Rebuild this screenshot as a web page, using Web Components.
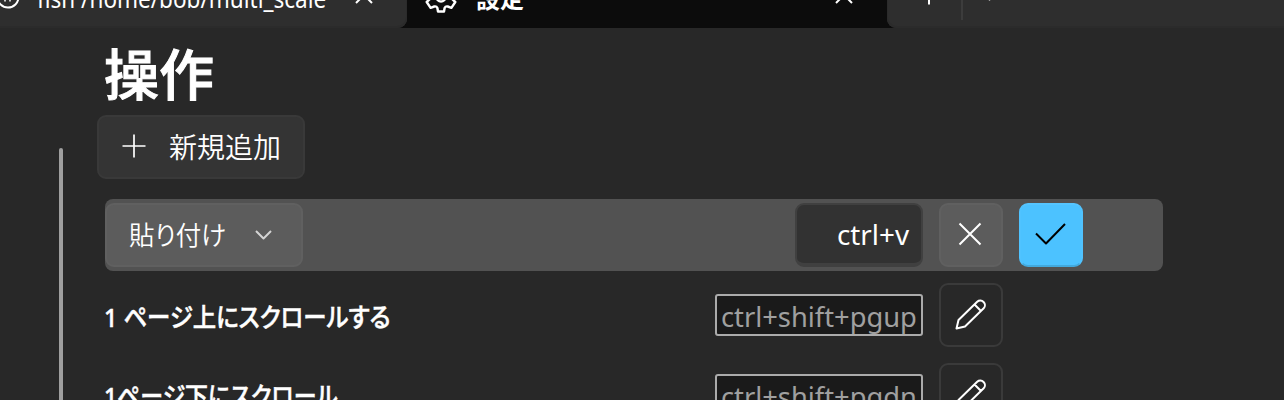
<!DOCTYPE html>
<html lang="ja">
<head>
<meta charset="utf-8">
<title>設定</title>
<style>
html,body{margin:0;height:400px;overflow:hidden;background:#282828}
body{font-family:"Noto Sans","Noto Sans CJK JP",sans-serif;color:#fff}
</style>
</head>
<body>
<settings-window></settings-window>
<script>
const define = (name, html, ready) => {
  const t = document.createElement('template');
  t.innerHTML = html;
  customElements.define(name, class extends HTMLElement {
    constructor(){ super(); this.attachShadow({mode:'open'}).append(t.content.cloneNode(true)); }
    connectedCallback(){ if (ready) ready(this, this.shadowRoot); }
  });
};

// One line of text condensed or widened to the width given in "w"; "dy" nudges its baseline.
define('fit-text', `<style>
:host{display:block;white-space:nowrap;flex:none;line-height:1.4;font-feature-settings:"palt"}
span{display:inline-block;transform-origin:0 50%}
</style><span><slot></slot></span>`, (el, root) => {
  const w = +el.getAttribute('w'), s = root.querySelector('span');
  el.style.width = w + 'px';
  s.style.transform = `translateY(${el.getAttribute('dy') || 0}px) scaleX(${w / s.offsetWidth})`;
});

const shapes = {
  plus: '<path d="M12 .5V23.5M.5 12H23.5"/>',
  close: '<path d="M1.5 1.5L22.5 22.5M22.5 1.5L1.5 22.5"/>',
  closeSmall: '<path d="M1 1L17 17M17 1L1 17"/>',
  check: '<path d="M1 11.5L11 21.5L30 2"/>',
  chevron: '<path d="M1 1L8.500 8.500L16 1"/>',
  pencil: '<path d="M1.500 29.500L3.500 21L22.200 2.800A4.600 4.600 0 0 1 28.700 9.300L10 27.500ZM19.500 5.500L26 12"/>',
  gear: '<path d="M13 1.500H19L19.600 5Q20.500 7 22.700 6.500L26.400 5.200L30.300 11L27.500 13.600Q26 16 27.500 18.400L30.300 21L26.400 26.800L22.700 25.500Q20.500 25 19.600 27L19 30.500H13L12.400 27Q11.500 25 9.300 25.500L5.600 26.800L1.700 21L4.500 18.400Q6 16 4.500 13.600L1.700 11L5.600 5.200L9.300 6.500Q11.500 7 12.400 5Z"/><circle cx="16" cy="16" r="4.500"/>',
  face: '<circle cx="12" cy="12" r="10.500"/><path d="M9 15V16.500M14 15V16.500" stroke-width="1.500"/>'
};
define('ui-icon', `<style>:host{display:block;flex:none}svg{display:block;fill:none;stroke:currentColor;stroke-linejoin:round}</style><svg></svg>`, (el, root) => {
  const s = root.querySelector('svg'), [w, h] = el.getAttribute('size').split(' ');
  s.setAttribute('width', w); s.setAttribute('height', h);
  s.setAttribute('viewBox', `0 0 ${w} ${h}`);
  s.setAttribute('stroke-width', el.getAttribute('stroke') || 2);
  s.innerHTML = shapes[el.getAttribute('name')];
});

define('ui-button', `<style>
:host{display:flex;align-items:center;justify-content:center;box-sizing:border-box;flex:none;width:64px;height:64px;border:2px solid #3a3a3a;border-radius:9px}
:host([kind=raised]){background:#343434;border-color:#393939}
:host([kind=light]){background:#5c5c5c;border-color:#606060}
:host([kind=accent]){background:#4cc2ff;border-color:#55c5ff #50c3ff #43a9dd;color:#000}
:host([wide]){justify-content:flex-start;padding-left:22px}
</style><slot></slot>`);

define('ui-tab', `<style>
:host{display:flex;box-sizing:border-box;height:76px;flex:none;align-items:center;background:#2e2e2e}
:host([pos=left]){width:407px;border-radius:0 0 9px 0;box-shadow:inset -1px -2px #2b2b2b}
:host([pos=right]){flex:1;border-radius:0 0 0 9px;box-shadow:inset 1px -2px #2b2b2b}
:host([pos=active]){width:480px;background:transparent;font-weight:600}
</style><slot></slot>`);

define('tab-strip', `<style>
:host{display:block;height:28px;overflow:hidden;background:#0c0c0c}
.row{display:flex;margin-top:-48px}
ui-tab{font-size:25px}
.sep{width:2px;height:48px;background:#3c3c3c}
</style>
<div class="row">
<ui-tab pos="left"><ui-icon name="face" size="24 24" style="margin:13px 0 0 -4px"></ui-icon><fit-text w="289" dy="8" style="margin-left:17px">fish /home/bob/multi_scale</fit-text><ui-icon name="closeSmall" size="18 18" style="margin:10px 0 0 29px"></ui-icon></ui-tab>
<ui-tab pos="active"><ui-icon name="gear" size="32 32" stroke="2.400" style="margin:13px 0 0 18px"></ui-icon><fit-text w="48" dy="8" style="margin-left:19px">設定</fit-text><ui-icon name="closeSmall" size="18 18" style="margin:10px 0 0 311px"></ui-icon></ui-tab>
<ui-tab pos="right"><ui-icon name="plus" size="24 24" style="margin:6px 0 0 30px"></ui-icon><div class="sep" style="margin:12px 0 0 20px"></div><ui-icon name="chevron" size="17 10" style="margin:12px 0 0 18px"></ui-icon></ui-tab>
</div>`);

define('key-chip', `<style>
:host{display:flex;align-items:center;justify-content:center;box-sizing:border-box;width:208px;height:42px;border:2px solid #ababab;border-radius:3px;background:#1a1a1a;color:#a0a0a0;font-size:27px}
</style><slot></slot>`);

define('key-field', `<style>
:host{display:flex;align-items:center;justify-content:flex-end;box-sizing:border-box;width:128px;height:64px;padding-right:12px;border:2px solid #404040;border-bottom-width:4px;border-radius:9px;background:#323232;font-size:27px}
</style><slot></slot>`);

define('action-row', `<style>
:host{display:grid;grid-template-columns:1fr auto 64px 64px;column-gap:16px;align-items:center;box-sizing:border-box;width:1058px;height:72px;padding-right:80px;border-radius:8px;font-size:26px;font-weight:500;-webkit-text-stroke:.5px}
:host([editing]){background:#525252;font-weight:400;-webkit-text-stroke:0}
::slotted(key-chip){font-weight:400;-webkit-text-stroke:0}
</style><slot></slot>`);

define('scroll-thumb', `<style>:host{display:block;width:4px;height:260px;border-radius:2px 2px 0 0;background:#9f9f9f}</style>`);

define('settings-window', `<style>
:host{display:block;height:400px;overflow:hidden}
main{display:grid;grid-template-columns:4px 1fr;column-gap:42px;padding-left:59px;height:372px;overflow:hidden}
scroll-thumb{margin-top:120px}
h1{margin:0 0 0 -1px;height:87px;font-size:55px;font-weight:500;-webkit-text-stroke:1px;display:flex;align-items:center}
.add{margin-left:-8px;width:208px;font-size:28px}
.list{display:grid;row-gap:8px;margin-top:20px}
</style>
<tab-strip></tab-strip>
<main>
<scroll-thumb></scroll-thumb>
<section>
<h1><fit-text w="110" dy="2">操作</fit-text></h1>
<ui-button class="add" kind="raised" wide><ui-icon name="plus" size="24 24" stroke="1.700" style="margin:-3px 0 0 1px"></ui-icon><fit-text w="112" dy="1" style="margin-left:23px;font-weight:350">新規追加</fit-text></ui-button>
<div class="list">
<action-row editing>
<ui-button kind="light" wide style="width:198px"><fit-text w="97" style="font-weight:350">貼り付け</fit-text><ui-icon name="chevron" size="17 10" style="margin-left:29px;color:#d4d4d4"></ui-icon></ui-button>
<key-field><fit-text w="72" dy="1">ctrl+v</fit-text></key-field>
<ui-button kind="light"><ui-icon name="close" size="24 24" style="margin:-2px 2px 0 0"></ui-icon></ui-button>
<ui-button kind="accent"><ui-icon name="check" size="32 24" style="margin-top:-2px"></ui-icon></ui-button>
</action-row>
<action-row><fit-text w="287" dy="2" style="margin-left:-1px">1 ページ上にスクロールする</fit-text><key-chip><fit-text w="196" dy="2">ctrl+shift+pgup</fit-text></key-chip><ui-button><ui-icon name="pencil" size="32 32"></ui-icon></ui-button></action-row>
<action-row><fit-text w="234" dy="1" style="margin-left:-1px">1ページ下にスクロール</fit-text><key-chip><fit-text w="196" dy="2">ctrl+shift+pgdn</fit-text></key-chip><ui-button><ui-icon name="pencil" size="32 32"></ui-icon></ui-button></action-row>
</div>
</section>
</main>`);
</script>
</body>
</html>
